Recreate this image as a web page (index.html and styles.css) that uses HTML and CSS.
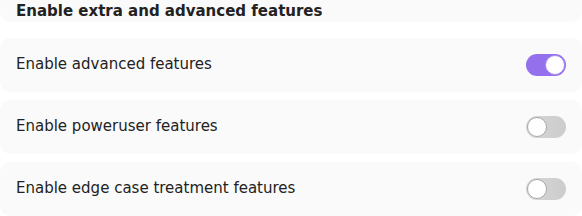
FILE: index.html
```html
<!DOCTYPE html>
<html lang="en">
<head>
    <meta charset="UTF-8">
    <meta name="viewport" content="width=device-width, initial-scale=1.0">
    <title>Features</title>
    <link rel="stylesheet" href="styles.css">
</head>
<body>
    <div class="settings">
        <div class="group-title">Enable extra and advanced features</div>

        <div class="setting-row">
            <span>Enable advanced features</span>
            <label class="switch">
                <input type="checkbox" checked>
                <span class="slider"></span>
            </label>
        </div>

        <div class="setting-row">
            <span>Enable poweruser features</span>
            <label class="switch">
                <input type="checkbox">
                <span class="slider"></span>
            </label>
        </div>

        <div class="setting-row">
            <span>Enable edge case treatment features</span>
            <label class="switch">
                <input type="checkbox">
                <span class="slider"></span>
            </label>
        </div>
    </div>
</body>
</html>
```

FILE: styles.css
```css
body {
    font-family: "DejaVu Sans", sans-serif;
    font-size: 15px;
    color: #222;
    background-color: #fff;
    margin: 0;
}
.settings {
    display: flex;
    flex-direction: column;
    gap: 8px;
}
.group-title {
    background-color: #fafafa;
    border-radius: 0 0 10px 10px;
    height: 22px;
    line-height: 22px;
    padding: 0 16px;
    font-weight: bold;
    margin-bottom: 8px;
}
.setting-row {
    background-color: #fafafa;
    border-radius: 10px;
    height: 54px;
    padding: 0 16px;
    display: flex;
    justify-content: space-between;
    align-items: center;
}
.setting-row span:first-child {
    margin-top: -2px;
}
.switch {
    position: relative;
    width: 40px;
    height: 22px;
}
.switch input {
    display: none;
}
.slider {
    position: absolute;
    inset: 0;
    background: linear-gradient(to right, #d8d8d8, #cccccc);
    border-radius: 11px;
    cursor: pointer;
}
.slider::before {
    content: "";
    position: absolute;
    top: 1px;
    left: 1px;
    width: 18px;
    height: 18px;
    background-color: #fff;
    border: 1px solid #a8a8a8;
    border-radius: 50%;
}
.switch input:checked + .slider {
    background: #9470ed;
}
.switch input:checked + .slider::before {
    left: 19px;
    border-color: #a78af0;
}
```
